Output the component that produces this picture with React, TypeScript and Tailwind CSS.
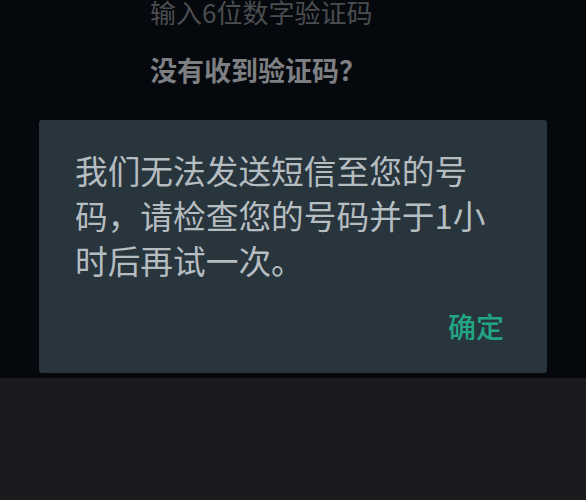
import React from 'react';

const cjk = { fontFamily: '"Noto Sans CJK SC", "Noto Sans", sans-serif' };

const lines = ['我们无法发送短信至您的号', '码，请检查您的号码并于1小', '时后再试一次。'];

export default function App() {
  return (
    <div className="w-[586px] h-[500px] overflow-hidden bg-[#1b1a1f] flex flex-col" style={cjk}>
      {/* Dimmed verification page behind the dialog */}
      <div className="h-[378px] bg-[#05080c] flex flex-col">
        <div className="pl-[150px] mt-[-5px] text-[26px] leading-[34px] text-[#4b4d50] whitespace-nowrap">
          输入6位数字验证码
        </div>
        <div className="pl-[150px] mt-[24px] text-[27px] leading-[34px] font-bold text-[#7d7f82] whitespace-nowrap">
          没有收到验证码？
        </div>

        {/* Alert dialog */}
        <div className="mx-[39px] mt-[33px] h-[253px] rounded-[3px] bg-[#28353d] pl-[36px] pr-[43px] pt-[27px] flex flex-col">
          <p className="text-[32.7px] leading-[45px] text-[#b6bdc1]">
            {lines.map((l) => (
              <span key={l} className="block whitespace-nowrap">
                {l}
              </span>
            ))}
          </p>
          <div className="mt-[27px] flex justify-end">
            <button className="text-[28px] leading-[34px] font-medium text-[#22a585]">确定</button>
          </div>
        </div>
      </div>
      <div className="flex-1 bg-[#1b1a1f]" />
    </div>
  );
}
